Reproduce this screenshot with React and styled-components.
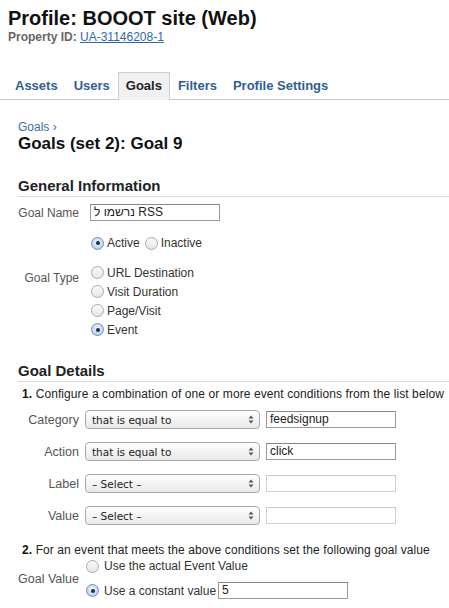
import React from 'react';
import styled, { createGlobalStyle } from 'styled-components';

const GlobalStyle = createGlobalStyle`
  html, body {
    margin: 0;
    padding: 0;
    background: #fff;
  }
  body {
    font-family: "Liberation Sans", Arial, Helvetica, sans-serif;
    font-size: 12px;
    color: #333;
  }
`;

const Page = styled.div`
  width: 449px;
  height: 608px;
  overflow: hidden;
  padding-top: 6px;
  box-sizing: border-box;
`;

const Header = styled.header`
  padding-left: 8px;
`;

const Title = styled.h1`
  margin: 0;
  font-size: 20px;
  line-height: 24px;
  font-weight: bold;
  color: #111;
`;

const PropertyLine = styled.div`
  line-height: 14px;
  font-weight: bold;
  color: #666;

  > a {
    font-weight: normal;
    color: #2d6aa3;
    text-decoration: underline;
  }
`;

const TabBar = styled.nav`
  display: flex;
  margin-top: 28px;
  padding-left: 7px;
  height: 27px;
  border-bottom: 1px solid #c8c8c8;
`;

const Tab = styled.div`
  padding: 0 7px;
  height: ${(p) => (p.$active ? 28 : 27)}px;
  line-height: 26px;
  font-size: 13px;
  font-weight: bold;
  color: ${(p) => (p.$active ? '#222' : '#2f5f92')};
  background: ${(p) => (p.$active ? '#f1f1f1' : 'transparent')};
  border: 1px solid ${(p) => (p.$active ? '#cfcfcf' : 'transparent')};
  border-bottom: none;
  box-sizing: border-box;
  margin-bottom: -1px;
`;

const Content = styled.main`
  padding-left: 14px;
`;

const Breadcrumb = styled.div`
  margin: 20px 0 0 4px;
  line-height: 14px;
  color: #3a6ea5;
`;

const PageTitle = styled.h2`
  margin: 0 0 0 4px;
  font-size: 17px;
  line-height: 20px;
  font-weight: bold;
  color: #111;
`;

const SectionTitle = styled.h3`
  margin: 23px 0 0 4px;
  padding-bottom: 1px;
  font-size: 15px;
  line-height: 18px;
  font-weight: bold;
  color: #222;
  border-bottom: 1px solid #dcdcdc;
`;

const FormGrid = styled.div`
  display: grid;
  grid-template-columns: 66px auto;
  column-gap: ${(p) => p.$gap || 10}px;
  row-gap: ${(p) => p.$rowGap || 0}px;
  margin-top: ${(p) => p.$top || 0}px;
  align-items: center;
`;

const Label = styled.div`
  text-align: right;
  padding-right: 1px;
  color: #555;
  line-height: 14px;
  white-space: nowrap;
  font-size: ${(p) => p.$size || 12}px;
  align-self: ${(p) => p.$align || 'center'};
  padding-top: ${(p) => p.$pt || 0}px;
`;

const TextInput = styled.div`
  width: ${(p) => p.$w}px;
  height: 17px;
  flex: none;
  box-sizing: border-box;
  border: 1px solid ${(p) => (p.$faint ? '#d2d2d2' : '#9a9a9a')};
  border-top-color: ${(p) => (p.$faint ? '#c8c8c8' : '#888')};
  padding: 0 3px;
  margin-left: ${(p) => p.$ml || 0}px;
  line-height: 15px;
  font-size: 12px;
  color: #222;
  background: #fff;
  white-space: nowrap;
`;

const OptionList = styled.div`
  display: flex;
  flex-direction: ${(p) => (p.$inline ? 'row' : 'column')};
  gap: ${(p) => p.$gap || 0}px;
  margin-top: ${(p) => p.$top || 0}px;
`;

const Option = styled.label`
  display: flex;
  align-items: center;
  gap: ${(p) => p.$gap || 3}px;
  height: ${(p) => p.$h || 19}px;
  margin-left: 1px;
  margin-right: 4px;
  color: #333;
  line-height: 14px;
  white-space: nowrap;
`;

const Radio = styled.span`
  width: 13px;
  height: 13px;
  border-radius: 50%;
  box-sizing: border-box;
  flex: none;
  display: flex;
  align-items: center;
  justify-content: center;
  border: 1px solid ${(p) => (p.$on ? '#6b8fbf' : '#a9a9a9')};
  background: ${(p) =>
    p.$on
      ? 'radial-gradient(circle at 50% 40%, #f4f8fd 0%, #bcd2ee 70%, #9bb8de 100%)'
      : 'linear-gradient(#fbfbfb, #e6e6e6)'};
  &::after {
    content: '';
    display: ${(p) => (p.$on ? 'block' : 'none')};
    width: 4px;
    height: 4px;
    border-radius: 50%;
    background: #1f2d3d;
  }
`;

const Instruction = styled.div`
  margin: ${(p) => p.$top || 0}px 0 0 8px;
  line-height: 14px;
  color: #222;
  white-space: nowrap;
  letter-spacing: 0.09px;

  > b {
    color: #111;
  }
`;

const ConditionRow = styled.div`
  display: flex;
  align-items: center;
  gap: 6px;
`;

const Select = styled.div`
  width: 175px;
  height: 19px;
  box-sizing: border-box;
  display: flex;
  align-items: center;
  justify-content: space-between;
  padding: 0 5px 0 6px;
  border: 1px solid #a8a8a8;
  border-radius: 4px;
  background: linear-gradient(#ffffff, #f3f3f3 55%, #e9e9e9);
  font-family: "DejaVu Sans", "Liberation Sans", sans-serif;
  font-size: 10.5px;
  color: #222;
`;

const Arrows = () => (
  <svg width="6" height="9" viewBox="0 0 6 9">
    <path d="M3 0.5 L5.5 3.5 L0.5 3.5 Z" fill="#555" />
    <path d="M3 8.5 L5.5 5.5 L0.5 5.5 Z" fill="#555" />
  </svg>
);

const conditions = [
  { label: 'Category', op: 'that is equal to', value: 'feedsignup' },
  { label: 'Action', op: 'that is equal to', value: 'click' },
  { label: 'Label', op: '– Select –', value: '' },
  { label: 'Value', op: '– Select –', value: '' },
];

const tabs = ['Assets', 'Users', 'Goals', 'Filters', 'Profile Settings'];

export default function App() {
  return (
    <Page>
      <GlobalStyle />
      <Header>
        <Title>Profile: BOOOT site (Web)</Title>
        <PropertyLine>
          Property ID: <a href="#">UA-31146208-1</a>
        </PropertyLine>
      </Header>

      <TabBar>
        {tabs.map((t) => (
          <Tab key={t} $active={t === 'Goals'}>
            {t}
          </Tab>
        ))}
      </TabBar>

      <Content>
        <Breadcrumb>Goals ›</Breadcrumb>
        <PageTitle>Goals (set 2): Goal 9</PageTitle>

        <SectionTitle>General Information</SectionTitle>
        <FormGrid $top={7}>
          <Label>Goal Name</Label>
          <TextInput $w={130}>נרשמו ל RSS</TextInput>

          <div />
          <OptionList $inline $top={14}>
            <Option $h={16}>
              <Radio $on />
              Active
            </Option>
            <Option $h={16}>
              <Radio />
              Inactive
            </Option>
          </OptionList>

          <Label $align="start" $pt={20}>Goal Type</Label>
          <OptionList $top={12}>
            <Option>
              <Radio />
              URL Destination
            </Option>
            <Option>
              <Radio />
              Visit Duration
            </Option>
            <Option>
              <Radio />
              Page/Visit
            </Option>
            <Option>
              <Radio $on />
              Event
            </Option>
          </OptionList>
        </FormGrid>

        <SectionTitle>Goal Details</SectionTitle>
        <Instruction $top={5}>
          <b>1.</b> Configure a combination of one or more event conditions from the list below
        </Instruction>
        <FormGrid $top={9} $gap={5} $rowGap={13}>
          {conditions.map((c) => (
            <React.Fragment key={c.label}>
              <Label $size={12.5}>{c.label}</Label>
              <ConditionRow>
                <Select>
                  <span>{c.op}</span>
                  <Arrows />
                </Select>
                <TextInput $w={130} $faint={!c.value}>
                  {c.value}
                </TextInput>
              </ConditionRow>
            </React.Fragment>
          ))}
        </FormGrid>

        <Instruction $top={18}>
          <b>2.</b> For an event that meets the above conditions set the following goal value
        </Instruction>
        <FormGrid $top={1} $gap={5}>
          <Label $size={12.5}>Goal Value</Label>
          <OptionList $gap={8}>
            <Option $h={16} $gap={5}>
              <Radio />
              Use the actual Event Value
            </Option>
            <Option $h={17} $gap={5}>
              <Radio $on />
              Use a constant value
              <TextInput $w={130} $ml={-3}>5</TextInput>
            </Option>
          </OptionList>
        </FormGrid>
      </Content>
    </Page>
  );
}
